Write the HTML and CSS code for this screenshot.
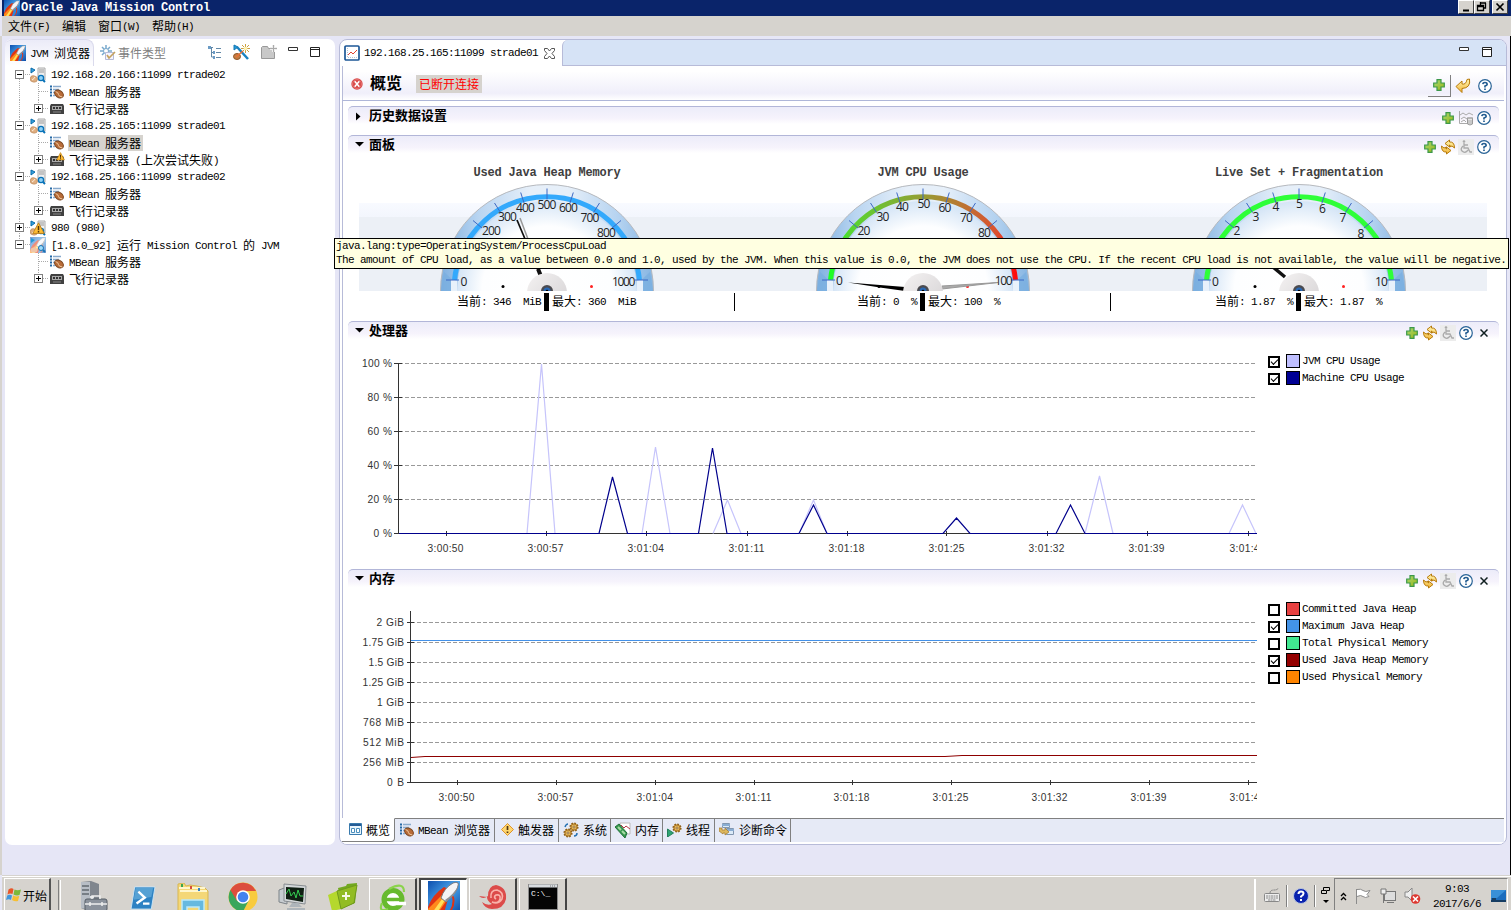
FILE: index.html
```html
<!DOCTYPE html>
<html lang="zh-CN">
<head>
<meta charset="utf-8">
<title>Oracle Java Mission Control</title>
<link rel="stylesheet" href="styles.css">
</head>
<body>
<svg class="defs" width="0" height="0">
  <defs>
    <linearGradient id="rocketBg" x1="0" y1="0" x2="1" y2="1"><stop offset="0" stop-color="#0d4fae"/><stop offset=".5" stop-color="#4aa4ea"/><stop offset="1" stop-color="#0b4ba8"/></linearGradient>
    <linearGradient id="plusG" x1="0" y1="0" x2="1" y2="1"><stop offset="0" stop-color="#a6d977"/><stop offset="1" stop-color="#9ab512"/></linearGradient>
    <linearGradient id="gold" x1="0" y1="0" x2="0" y2="1"><stop offset="0" stop-color="#fff6b0"/><stop offset="1" stop-color="#f3b63a"/></linearGradient>
    <linearGradient id="rim" x1="0" y1="0" x2="1" y2="0"><stop offset="0" stop-color="#7fb0e0"/><stop offset=".18" stop-color="#b9d5f1"/><stop offset=".42" stop-color="#e6eff9"/><stop offset=".6" stop-color="#e6eff9"/><stop offset=".84" stop-color="#b4d2f0"/><stop offset="1" stop-color="#86b5e2"/></linearGradient>
    <radialGradient id="face" cx=".5" cy=".5" r=".5"><stop offset="0" stop-color="#fff"/><stop offset=".72" stop-color="#fdfeff"/><stop offset="1" stop-color="#d5e5f6"/></radialGradient>
    <linearGradient id="heat" x1="0" y1="0" x2="1" y2="0"><stop offset="0" stop-color="#1bff24"/><stop offset=".1" stop-color="#55d632"/><stop offset=".5" stop-color="#969e34"/><stop offset=".9" stop-color="#dc5030"/><stop offset="1" stop-color="#ff0a0a"/></linearGradient>
    <linearGradient id="hub" x1="0" y1="0" x2="1" y2="1"><stop offset="0" stop-color="#f4f2f2"/><stop offset="1" stop-color="#d3d0d2"/></linearGradient>

    <symbol id="i-rocket" viewBox="0 0 16 16"><rect width="16" height="16" fill="url(#rocketBg)"/><path d="M0 13Q2 7 8 3L10 4 13 8Q14 12 11 16H0Z" fill="#df3413"/><path d="M8 16 10 9 12 8Q13 12 10 16Z" fill="#2c86dc"/><path d="M0 14 7 7 9.500 9.500 5 16H0Z" fill="#ff8a1c"/><path d="M2 16 7 9 8.200 10 4.500 16Z" fill="#ffe05a"/><path d="M6.500 8.500Q8 3.500 12.500 1 15 .200 15.200 1.500 15 5.500 9 10.500Z" fill="#f4f4f6" stroke="#77787e" stroke-width=".5"/><path d="M8.500 9.500Q13 6.500 15 2.500 14 7 9 10.500Z" fill="#8d9097"/></symbol>
    <symbol id="i-jvm" viewBox="0 0 16 16"><path d="M8 1h7v12H8Z" fill="#eee" stroke="#aaa"/><path d="M9 3h5M9 5h5" stroke="#999"/><path d="M1 1v5l4-3Z" fill="#36a3df" stroke="#086aa9"/><ellipse cx="3.800" cy="12" rx="3.500" ry="3" fill="#dfae80" stroke="#c9986c" transform="rotate(20 4 12)"/><path d="M2 13Q4 12 5 10" stroke="#fff0dd" fill="none"/><circle cx="11" cy="11" r="2.600" fill="#8fd2f8" stroke="#0872b8" stroke-width="1.300"/><path d="m13 13 2 2" stroke="#0872b8" stroke-width="2"/></symbol>
    <symbol id="i-warn" viewBox="0 0 16 16"><path d="M8 1 15 14H1Z" fill="#ffbd35" stroke="#b47610" stroke-linejoin="round"/><path d="M8 5v5M8 11v2" stroke="#55350a" stroke-width="1.800"/></symbol>
    <symbol id="i-bean" viewBox="0 0 14 14"><path d="M0 1.500h2M0 4.500h2M0 7.500h2M0 10.500h2" stroke="#2468a5" stroke-width="2"/><path d="M3 1.500h8M3 4.500h6M3 7.500h2M3 10.500h2" stroke="#87a9cc" stroke-width="1.500"/><ellipse cx="9" cy="9" rx="4.700" ry="3.400" fill="#b86c38" stroke="#784019" transform="rotate(35 9 9)"/><path d="M5.500 6.500q3 1 3 3t4 2.500" stroke="#f1c99e" fill="none"/></symbol>
    <symbol id="i-rec" viewBox="0 0 14 10"><path d="M1 0h12l1 2v8H0V2Z" fill="#414141"/><path d="M2 2h10v4H2Z" fill="#aaa"/><path d="M3 3h2v2H3ZM9 3h2v2H9ZM6 3h2v2H6Z" fill="#333"/><path d="M3 8h8" stroke="#888"/></symbol>
    <symbol id="i-plus" viewBox="0 0 12 12"><path d="M4 0.700h4V4h3.300v4H8v3.300H4V8H.700V4H4Z" fill="url(#plusG)" stroke="#3b984a" stroke-width="1.200"/></symbol>
    <symbol id="i-help" viewBox="0 0 14 14"><circle cx="7" cy="7" r="6.300" fill="#fff" stroke="#286396" stroke-width="1.200"/><path d="M4.800 5.200Q5 3.500 7 3.500t2.200 1.700Q9.200 6.200 7 7v1.500M7 9.500v1.500" fill="none" stroke="#245d91" stroke-width="1.700"/></symbol>
    <symbol id="i-back" viewBox="0 0 16 16"><path d="M1 8.500 7 3v3q4 1 5-4.500l2.500-.500q1.500 9-7.500 9.500v4Z" fill="url(#gold)" stroke="#b77a0b"/></symbol>
    <symbol id="i-sync" viewBox="0 0 16 16"><path d="M5 4.500 9.500 1v2q5-.500 5 6l-2.500-2-2.500 1Q11 6 9.500 6v2ZM11 11.500 6.500 15v-2q-5 .500-5-6L4 9l2.500-1Q5 10 6.500 10V8Z" fill="url(#gold)" stroke="#b77a0b"/></symbol>
    <symbol id="i-acc" viewBox="0 0 16 16"><rect width="16" height="16" fill="#ececec"/><circle cx="6" cy="2.500" r="1.300" fill="#aaa"/><path d="M6 4v5h4l2 4h2M6 6h4M5 7q-3 3-1 5 3 3 6-1" fill="none" stroke="#aaa" stroke-width="1.300"/></symbol>
    <symbol id="i-clear" viewBox="0 0 16 16"><path d="M1.500 1v12.500H9M2 5l3-2 3 2 3-2 4 2M3 9l3-2 3 2M3 12l3-2 2 2" fill="none" stroke="#aaa"/><path d="M9.500 8h5v6q-2.500 2-5 0Z" fill="#e6e6e6" stroke="#999"/><path d="M11 10v4M13 10v4M9 8h6" stroke="#aaa"/></symbol>
    <symbol id="i-x" viewBox="0 0 8 8"><path d="m.500.500 7 7M7.500.500l-7 7" stroke="#102020" stroke-width="1.500"/></symbol>
    <symbol id="i-min" viewBox="0 0 12 12"><path d="M1.500 1.500h9v3h-9Z" fill="#fff" stroke="#333"/></symbol>
    <symbol id="i-max" viewBox="0 0 12 12"><path d="M1.500 1.500h9v9h-9ZM1 3.500h10" fill="#fff" stroke="#222"/></symbol>
    <symbol id="i-gear" viewBox="0 0 12 12"><circle cx="6" cy="6" r="4.500" fill="#e8ad42" stroke="#8d601d" stroke-width="2" stroke-dasharray="2 1.500"/><circle cx="6" cy="6" r="3.500" fill="#f1c565" stroke="#9d6b22"/><circle cx="6" cy="6" r="1.300" fill="#fff" stroke="#815315"/></symbol>

    <symbol id="dial" viewBox="0 0 216 107">
      <circle cx="108" cy="107" r="106.500" fill="url(#rim)" stroke="#b5b8bd"/>
      <circle cx="108" cy="107" r="90" fill="url(#face)"/>
      <path d="M2 107 5 88l13 12v7ZM214 107l-3-19-13 12v7Z" fill="#78aee0" opacity=".7"/>
      <path d="M12 96v11h6V96ZM198 96v11h6V96Z" fill="#e8f1fb"/>
    </symbol>
    <symbol id="ticks" viewBox="0 0 216 107">
      <g stroke="#3d69c5" stroke-width="1"><path d="M108 4.500v11"/><path d="M81.700 8.500l3.500 11"/><path d="M134.300 8.500l-3.500 11"/><path d="M55.500 19l6 9.500"/><path d="M160.500 19l-6 9.500"/><path d="M34 36.500l9 7.500"/><path d="M182 36.500l-9 7.500"/><path d="M7 96h13M196 96h13"/></g>
      <circle cx="64" cy="102.500" r="1.500"/><circle cx="152.500" cy="102.500" r="1.500" fill="#f22"/>
    </symbol>
    <symbol id="pivot" viewBox="0 0 216 107"><circle cx="108" cy="109" r="20" fill="url(#hub)"/><circle cx="108" cy="107" r="6" fill="#4b4b50"/><circle cx="108" cy="107" r="3.500" fill="#2868b5"/><circle cx="108" cy="107" r="1.300" fill="#000"/></symbol>
  </defs>
</svg>

<div class="screen">
  <header class="titlebar"><svg width="16" height="16"><use href="#i-rocket"/></svg><b>Oracle Java Mission Control</b>
    <span class="winbtns"><i><svg width="14" height="12"><path d="M4 9.500h6" stroke="#000" stroke-width="2"/></svg></i><i><svg width="14" height="12"><path d="M5.500 1v3M5 2h6M10.500 2v5h-2M2.500 4.500h6v5h-6ZM2 5.500h7" fill="none" stroke="#000" stroke-width="1.300"/></svg></i><i class="close"><svg width="14" height="12"><path d="m3.500 2.500 7 7m0-7-7 7" stroke="#000" stroke-width="1.700"/></svg></i></span>
  </header>
  <nav class="menubar"><span>文件<em>(F)</em></span><span>编辑</span><span>窗口<em>(W)</em></span><span>帮助<em>(H)</em></span></nav>

  <main class="workspace">
    <aside class="browser">
      <div class="viewtabs">
        <div class="viewtab"><svg width="16" height="16"><use href="#i-rocket"/></svg><span><em>JVM </em>浏览器</span></div>
        <div class="viewtab off"><svg width="16" height="16" viewBox="0 0 16 16"><path d="M6 0v12M0 6h12M2 2l8 8M10 2l-8 8" stroke="#78a9cd" stroke-width="1.500"/><circle cx="6" cy="6" r="2.500" fill="#fff" stroke="#78a9cd"/><path d="M5.500 7.500h8v7h-8Z" fill="#f4f4ff" stroke="#b5b9d6"/><path d="m7 10 2 3 6-6" fill="none" stroke="#c4a25e" stroke-width="1.700"/></svg><span>事件类型</span></div>
        <div class="viewtools">
          <svg width="14" height="13" viewBox="0 0 14 13"><path d="M1 1.500h4M3.500 2v9h3M4 6.500h3M8 2.500h5M8 6.500h5M8 11.500h5" fill="none" stroke="#6288a7"/><path d="M0 0h3v3H0ZM5 5h2v3H5ZM5 10h2v3H5Z" fill="#6b9bc5"/></svg>
          <svg width="17" height="16" viewBox="0 0 17 16"><path d="M1 1v5l4-3Z" fill="#229bd9" stroke="#1578b5"/><path d="m4 3 11 12" stroke="#1981c0" stroke-width="2.500"/><path d="M12.500 0v9M8 4.500h9M9 1l7 7M16 1 9 8" stroke="#cda040"/><circle cx="12.500" cy="4.500" r="1.800" fill="#fff4b6"/><ellipse cx="4" cy="12.500" rx="3.500" ry="3" fill="#c27d43" stroke="#8e5426"/><path d="M3 13 10 7" stroke="#eb6f34" stroke-width="1.500"/></svg>
          <svg width="16" height="15" viewBox="0 0 16 15"><path d="M.500 13.500v-11l1-1h5l1 2h6v10Z" fill="#c8c8c8" stroke="#999"/><path d="M12.500 0v7M9 3.500h7" stroke="#eee" stroke-width="3"/><path d="M12.500 0v7M9 3.500h7" stroke="#aaa"/></svg>
          <svg width="12" height="12"><use href="#i-min"/></svg>
          <svg width="12" height="12"><use href="#i-max"/></svg>
        </div>
      </div>
      <div class="tree">
        <div class="root first"><i class="box minus"></i><svg width="16" height="16"><use href="#i-jvm"/></svg><em>192.168.20.166:11099 rtrade02</em></div>
        <div class="kid"><svg width="14" height="14"><use href="#i-bean"/></svg><span><em>MBean </em>服务器</span></div>
        <div class="kid last"><i class="box plus"></i><svg width="14" height="10"><use href="#i-rec"/></svg><span>飞行记录器</span></div>
        <div class="root"><i class="box minus"></i><svg width="16" height="16"><use href="#i-jvm"/></svg><em>192.168.25.165:11099 strade01</em></div>
        <div class="kid"><svg width="14" height="14"><use href="#i-bean"/></svg><span class="sel"><em>MBean </em>服务器</span></div>
        <div class="kid last"><i class="box plus"></i><svg class="over" width="14" height="12"><use href="#i-rec" y="2" width="14" height="10"/><use href="#i-warn" x="6" y="-2" width="9" height="9"/></svg><span>飞行记录器<em> (</em>上次尝试失败<em>)</em></span></div>
        <div class="root"><i class="box minus"></i><svg width="16" height="16"><use href="#i-jvm"/></svg><em>192.168.25.166:11099 strade02</em></div>
        <div class="kid"><svg width="14" height="14"><use href="#i-bean"/></svg><span><em>MBean </em>服务器</span></div>
        <div class="kid last"><i class="box plus"></i><svg width="14" height="10"><use href="#i-rec"/></svg><span>飞行记录器</span></div>
        <div class="root"><i class="box plus"></i><svg width="16" height="16"><use href="#i-jvm"/><use href="#i-warn" x="2" y="2" width="13" height="13"/></svg><em>980 (980)</em></div>
        <div class="root end"><i class="box minus"></i><svg width="16" height="16"><use href="#i-rocket" opacity=".55"/><path d="M1 1v5l4-3Z" fill="#229bd9"/><ellipse cx="4" cy="13" rx="3.500" ry="2.500" fill="#efc6a8"/><circle cx="11" cy="11" r="2.500" fill="#9edbfb" stroke="#1775b6"/><path d="m13 13 2 2" stroke="#1775b6" stroke-width="2"/></svg><span><em>[1.8.0_92] </em>运行<em> Mission Control </em>的<em> JVM</em></span></div>
        <div class="kid off"><svg width="14" height="14"><use href="#i-bean"/></svg><span><em>MBean </em>服务器</span></div>
        <div class="kid last off"><i class="box plus"></i><svg width="14" height="10"><use href="#i-rec"/></svg><span>飞行记录器</span></div>
      </div>
    </aside>

    <section class="editor">
      <div class="edtabs">
        <div class="edtab"><svg width="16" height="16" viewBox="0 0 16 16"><rect x="1" y="1" width="14" height="14" rx="1" fill="#fff" stroke="#1c5796" stroke-width="1.700"/><path d="M3.500 3v9.500H13" fill="none" stroke="#b7c3d2" stroke-dasharray="1 1"/><path d="m4 10 3-3 2 2 4-4" fill="none" stroke="#e04231"/></svg><em>192.168.25.165:11099 strade01</em>
          <svg width="11" height="11" viewBox="0 0 11 11"><path d="M.500.500h3l2 2.500 2-2.500h3v2L8 5.500l2.500 3v2h-3l-2-2.500-2 2.500h-3v-2l2.500-3-2.500-3Z" fill="#fff" stroke="#555"/></svg></div>
        <div class="edspace"><svg width="12" height="12"><use href="#i-min"/></svg><svg width="12" height="12"><use href="#i-max"/></svg></div>
      </div>
      <div class="formhead">
        <svg width="12" height="12" viewBox="0 0 12 12"><circle cx="6" cy="6" r="5.700" fill="#d84b4b"/><circle cx="6" cy="6" r="4.500" fill="none" stroke="#ec8c88" stroke-width=".6"/><path d="m3.700 3.200 4.600 5.600m0-5.600L3.700 8.800" stroke="#fff" stroke-width="1.500"/></svg>
        <h1>概览</h1><span class="lost">已断开连接</span>
        <div class="headtools"><span class="raised"><svg width="12" height="12"><use href="#i-plus"/></svg></span><svg width="16" height="16"><use href="#i-back"/></svg><svg width="14" height="14"><use href="#i-help"/></svg></div>
      </div>

      <div class="form">
        <section class="sec hist">
          <div class="bar"><svg class="tw" width="7" height="9"><path d="M1 0.500v8l4.500-4Z"/></svg><h2>历史数据设置</h2><div class="tools"><svg width="12" height="12"><use href="#i-plus"/></svg><svg width="16" height="16"><use href="#i-clear"/></svg><svg width="14" height="14"><use href="#i-help"/></svg></div></div>
        </section>
        <section class="sec dash">
          <div class="bar"><svg class="tw" width="9" height="7"><path d="M0 1h9L4.500 5.500Z"/></svg><h2>面板</h2><div class="tools"><svg width="12" height="12"><use href="#i-plus"/></svg><svg class="sync" width="16" height="16"><use href="#i-sync"/></svg><svg width="16" height="16"><use href="#i-acc"/></svg><svg width="14" height="14"><use href="#i-help"/></svg></div></div>
          <div class="gauges">
            <div class="gauge"><h3>Used Java Heap Memory</h3>
              <svg width="216" height="107" class="num"><use href="#dial"/><path d="M15.500 96A93 93 0 0 1 200.500 96" fill="none" stroke="#33a9fc" stroke-width="5"/><use href="#ticks"/>
                <path d="M81 34 106 100" stroke="#999" stroke-width="1.500"/><path d="M78 36 108 107" stroke="#111" stroke-width="1.700"/><path d="M99 85 108 107" stroke="#111" stroke-width="4"/><use href="#pivot"/>
                <text x="24.500" y="102">0</text><text x="52" y="50.500">200</text><text x="68" y="36.500">300</text><text x="86" y="28">400</text><text x="107.500" y="25">500</text><text x="129" y="28">600</text><text x="150.500" y="38">700</text><text x="167" y="52.500">800</text><text x="184" y="102" class="tight">1000</text></svg>
              <div class="read"><span>当前<em>: 346  MiB</em></span><i></i><span>最大<em>: 360  MiB</em></span></div></div>
            <div class="gauge"><h3>JVM CPU Usage</h3>
              <svg width="216" height="107" class="num"><use href="#dial"/><path d="M15.500 96A93 93 0 0 1 200.500 96" fill="none" stroke="url(#heat)" stroke-width="5"/><use href="#ticks"/>
                <path d="M183 98.500 127 102v3Z" fill="#aaa" stroke="#999"/><path d="M33 98.500 65 101 90 103v4L65 103.500Z"/><use href="#pivot"/>
                <text x="24" y="101">0</text><text x="48.500" y="50.500">20</text><text x="67.500" y="36.500">30</text><text x="87" y="27">40</text><text x="108.500" y="24">50</text><text x="129.500" y="28">60</text><text x="151" y="38">70</text><text x="169" y="52.500">80</text><text x="188" y="101" class="tight">100</text></svg>
              <div class="read"><span>当前<em>: 0  %</em></span><i></i><span>最大<em>: 100  %</em></span></div></div>
            <div class="gauge"><h3>Live Set + Fragmentation</h3>
              <svg width="216" height="107" class="num"><use href="#dial"/><path d="M15.500 96A93 93 0 0 1 200.500 96" fill="none" stroke="#2eff38" stroke-width="5"/><use href="#ticks"/>
                <path d="M76 78 94 93" stroke="#111" stroke-width="3.500"/><use href="#pivot"/>
                <text x="24" y="101.500">0</text><text x="45.500" y="50.500">2</text><text x="64.500" y="37">3</text><text x="84.500" y="27">4</text><text x="108" y="24">5</text><text x="131" y="29">6</text><text x="151.500" y="37.500">7</text><text x="169.500" y="53.500">8</text><text x="190" y="102">10</text></svg>
              <div class="read"><span>当前<em>: 1.87  %</em></span><i></i><span>最大<em>: 1.87  %</em></span></div></div>
          </div>
        </section>
        <section class="sec cpu">
          <div class="bar"><svg class="tw" width="9" height="7"><path d="M0 1h9L4.500 5.500Z"/></svg><h2>处理器</h2><div class="tools"><svg width="12" height="12"><use href="#i-plus"/></svg><svg class="sync" width="16" height="16"><use href="#i-sync"/></svg><svg width="16" height="16"><use href="#i-acc"/></svg><svg width="14" height="14"><use href="#i-help"/></svg><svg width="8" height="8" class="xx"><use href="#i-x"/></svg></div></div>
          <div class="plotrow">
            <svg class="plot" width="909" height="210" viewBox="348 350 909 210">
              <path class="grid" d="M399 363.500H1257M399 397.500H1257M399 431.500H1257M399 465.500H1257M399 499.500H1257"/>
              <path class="axis" d="M398.500 363V534M394 363.500h8M394 397.500h8M394 431.500h8M394 465.500h8M394 499.500h8M394 533.500H1257M446.500 531v5M546.500 531v5M646.500 531v5M747.500 531v5M847.500 531v5M946.500 531v5M1047.500 531v5M1147.500 531v5M1248.500 531v5"/>
              <path d="M527 533.500 541.500 364 555 533.500M642 533.500 655.500 447 670 533.500M713 533.500 727.500 500 741 533.500M799 533.500 813.500 500 827 533.500M1085 533.500 1099.500 476 1113 533.500M1229 533.500 1242.500 505 1256 533.500" fill="none" stroke="#c6c4fb" stroke-width="1.200"/>
              <path d="M399 533.500H599L612.500 477 627.500 533.500H698.500L712.500 448 727 533.500H799L813.500 505 827 533.500H943L956.500 518 970 533.500H1056L1070.500 505 1085 533.500H1257" fill="none" stroke="#00008c" stroke-width="1.200"/>
              <g class="yl"><text x="392" y="367" textLength="30">100 %</text><text x="392" y="401" textLength="24.500">80 %</text><text x="392" y="435" textLength="24.500">60 %</text><text x="392" y="469" textLength="24.500">40 %</text><text x="392" y="503" textLength="24.500">20 %</text><text x="392" y="537" textLength="18.500">0 %</text></g>
              <g class="xl"><text x="427.500" y="552" textLength="36">3:00:50</text><text x="527.500" y="552" textLength="36">3:00:57</text><text x="627.500" y="552" textLength="36.500">3:01:04</text><text x="728.500" y="552" textLength="36">3:01:11</text><text x="828.500" y="552" textLength="36">3:01:18</text><text x="928.500" y="552" textLength="36">3:01:25</text><text x="1028.500" y="552" textLength="36">3:01:32</text><text x="1128.500" y="552" textLength="36">3:01:39</text><text x="1229.500" y="552" textLength="36">3:01:46</text></g>
            </svg>
            <ul class="legend">
              <li><i class="ck on"></i><b class="c1"></b><em>JVM CPU Usage</em></li>
              <li><i class="ck on"></i><b class="c2"></b><em>Machine CPU Usage</em></li>
            </ul>
          </div>
        </section>
        <section class="sec mem">
          <div class="bar"><svg class="tw" width="9" height="7"><path d="M0 1h9L4.500 5.500Z"/></svg><h2>内存</h2><div class="tools"><svg width="12" height="12"><use href="#i-plus"/></svg><svg class="sync" width="16" height="16"><use href="#i-sync"/></svg><svg width="16" height="16"><use href="#i-acc"/></svg><svg width="14" height="14"><use href="#i-help"/></svg><svg width="8" height="8" class="xx"><use href="#i-x"/></svg></div></div>
          <div class="plotrow">
            <svg class="plot" width="909" height="210" viewBox="348 598 909 210">
              <path class="grid" d="M411 622.500H1257M411 642.500H1257M411 662.500H1257M411 682.500H1257M411 702.500H1257M411 722.500H1257M411 742.500H1257M411 762.500H1257"/>
              <path class="axis" d="M410.500 611V783M407 622.500h7M407 642.500h7M407 662.500h7M407 682.500h7M407 702.500h7M407 722.500h7M407 742.500h7M407 762.500h7M407 782.500H1257M457.500 780v5M556.500 780v5M655.500 780v5M754.500 780v5M852.500 780v5M951.500 780v5M1050.500 780v5M1149.500 780v5M1248.500 780v5"/>
              <path d="M411 640.500H1257" stroke="#4391e8"/>
              <path d="M411 757.500 425 756.500H945L962 755.500H1257" fill="none" stroke="#8e0000"/>
              <g class="yl"><text x="404" y="626" textLength="27.500">2 GiB</text><text x="404" y="646" textLength="41.500">1.75 GiB</text><text x="404" y="666" textLength="35.500">1.5 GiB</text><text x="404" y="686" textLength="41.500">1.25 GiB</text><text x="404" y="706" textLength="27">1 GiB</text><text x="404" y="726" textLength="41">768 MiB</text><text x="404" y="746" textLength="41">512 MiB</text><text x="404" y="766" textLength="41">256 MiB</text><text x="404" y="786" textLength="17">0 B</text></g>
              <g class="xl"><text x="438.500" y="801" textLength="36">3:00:50</text><text x="537.500" y="801" textLength="36">3:00:57</text><text x="636.500" y="801" textLength="36.500">3:01:04</text><text x="735.500" y="801" textLength="36">3:01:11</text><text x="833.500" y="801" textLength="36">3:01:18</text><text x="932.500" y="801" textLength="36">3:01:25</text><text x="1031.500" y="801" textLength="36">3:01:32</text><text x="1130.500" y="801" textLength="36">3:01:39</text><text x="1229.500" y="801" textLength="36">3:01:46</text></g>
            </svg>
            <ul class="legend">
              <li><i class="ck"></i><b class="c3"></b><em>Committed Java Heap</em></li>
              <li><i class="ck on"></i><b class="c4"></b><em>Maximum Java Heap</em></li>
              <li><i class="ck"></i><b class="c5"></b><em>Total Physical Memory</em></li>
              <li><i class="ck on"></i><b class="c6"></b><em>Used Java Heap Memory</em></li>
              <li><i class="ck"></i><b class="c7"></b><em>Used Physical Memory</em></li>
            </ul>
          </div>
        </section>
      </div>

      <nav class="pages">
        <div class="page cur"><svg width="13" height="12" viewBox="0 0 13 12"><path d="M.500.500h12v11H.500Z" fill="#e9f5fc" stroke="#397aad"/><path d="M1 2h11" stroke="#245c95" stroke-width="2"/><path d="M2.500 5.500h3v4h-3ZM7.500 5.500h3v4h-3Z" fill="#fff" stroke="#498ebd"/></svg><span>概览</span></div>
        <div class="page w2"><svg width="14" height="14"><use href="#i-bean"/></svg><span><em>MBean </em>浏览器</span></div>
        <div class="page w3"><svg width="13" height="13" viewBox="0 0 13 13"><path d="m6.500.500 6 6-6 6-6-6Z" fill="#ffd66d" stroke="#dc942e"/><path d="M6.500 3v4M6.500 8.500v1.500" stroke="#4e3514" stroke-width="1.700"/></svg><span>触发器</span></div>
        <div class="page w4"><svg width="16" height="16"><use href="#i-gear" x="0" y="6" width="10" height="10"/><use href="#i-gear" x="6" y="0" width="10" height="10"/><path d="M2 5q1-3 3-3M11 14q3 0 3-3" fill="none" stroke="#2571b3" stroke-width="1.500"/></svg><span>系统</span></div>
        <div class="page w4"><svg width="16" height="16" viewBox="0 0 16 16"><path d="M5 1h10v11H7Z" fill="#fff" stroke="#bbb"/><path d="m6 3 3 3 2-2 4 3" fill="none" stroke="#b33845"/><path d="M0 5 4 2l8 9-2 5Z" fill="#37974e" stroke="#20723a"/><path d="m3 5 3 3m1 1 3 3" stroke="#a7dba4" stroke-width="2"/></svg><span>内存</span></div>
        <div class="page w4"><svg width="15" height="14"><use href="#i-gear" x="5" y="0" width="10" height="10"/><path d="M0.500 6v8l6-4Z" fill="#2fa574" stroke="#23805a"/></svg><span>线程</span></div>
        <div class="page w7"><svg width="16" height="14" viewBox="0 0 16 14"><path d="M3.500.500h7v4h-7ZM7.500 5.500h7v6h-7Z" fill="#dcebf8" stroke="#8297b0"/><path d="M3 2h8M7 7h8" stroke="#8aadd2" stroke-width="2"/><path d="M0 5h3v2h3V5l4 4-4 3v-2H4v1L0 8Z" fill="#ddb75c" stroke="#a1782d" stroke-width=".7"/></svg><span>诊断命令</span></div>
      </nav>
    </section>
  </main>

  <footer class="taskbar">
    <div class="start"><svg width="16" height="16" viewBox="0 0 16 16"><path d="M2.500 2.500q3-2 5-.500L6.500 7Q4 6 1.500 7.500Z" fill="#e8562a"/><path d="M8.500 2.500q3 1.500 6.500 0L13.500 8q-3 1-6-.500Z" fill="#7bb93a"/><path d="M1.200 8.500Q4 7 6 8.500L5 13q-2-1.500-5 0Z" fill="#4196dc"/><path d="M7.200 8.500q2.500 1.500 6 .500L12 14q-3 1-6-1Z" fill="#f6bf32"/></svg><span>开始</span></div>
    <i class="grip"></i>
    <div class="quick">
      <svg width="30" height="32" viewBox="0 0 30 32"><path d="M2 1 12 0l8 3v23L9 30 2 27Z" fill="#80868e"/><path d="M2 1h9v28l-9-2Z" fill="#b7bdc5"/><path d="M3 5h7M3 9h7M3 13h7" stroke="#636970" stroke-width="1.500"/><path d="M11 15h4v6h-4Z" fill="#dfe3e7"/><rect x="6" y="18" width="22" height="12" rx="2" fill="#8b929c" stroke="#555c65"/><path d="M13 18v-3h8v3M6 23h22M11 21v4M23 21v4" fill="none" stroke="#eee" stroke-width="1.500"/></svg>
      <svg width="28" height="24" viewBox="0 0 28 26"><path d="M5 1h22l-4 24H1Z" fill="#2d82c3" stroke="#cbe5f5"/><path d="M6 2h19l-2 10L4 15Z" fill="#68aedb" opacity=".7"/><path d="m9 6 7 6.500L7 19M14 19h7" fill="none" stroke="#fff" stroke-width="2.500"/></svg>
      <svg width="32" height="30" viewBox="0 0 32 30"><path d="M1 5V1l6-1 2 3 4-1 7 1 8 2 3 3v22H1Z" fill="#f4d777" stroke="#d7b652"/><path d="M2 5h26M3 8h27" stroke="#fff6cb" stroke-width="2"/><path d="M5 1v3" stroke="#35a752" stroke-width="2"/><path d="M14 3v3" stroke="#d84c3b" stroke-width="2"/><path d="M22 5v3" stroke="#3582c4" stroke-width="2"/><path d="M5 17h22v13h-5v-6H10v6H5Z" fill="#67b9df" stroke="#bae9fb" stroke-width="1.500"/></svg>
      <svg width="30" height="30" viewBox="0 0 30 30"><circle cx="15" cy="15" r="14.500" fill="#f8cb3f"/><path d="M15 15 2.400 8A14.500 14.500 0 0 0 15 29.500L21 18Z" fill="#39a65c"/><path d="M2.400 8 9 19l6-10h13A14.500 14.500 0 0 0 2.400 8Z" fill="#dc4d3d"/><circle cx="15" cy="15" r="6.800" fill="#fff"/><circle cx="15" cy="15" r="5.300" fill="#4382ef"/></svg>
      <svg width="30" height="30" viewBox="0 0 30 30"><path d="M1 7 9 4v17l-8-2Z" fill="#c7ccd0" stroke="#7d8388"/><path d="M6 1 28 3l-1 18L6 18Z" fill="#d4d8da" stroke="#878c90"/><path d="M8 4 26 5l-1 14L8 16Z" fill="#101f13"/><path d="m8 11 3-5 2 7 3-4 2 6 2-8 2 6h3" fill="none" stroke="#34cc50"/><path d="M11 24h13l-4-4h-6ZM9 25h18v2H9Z" fill="#aeb5ba"/></svg>
      <svg width="30" height="28" viewBox="0 0 30 28"><path d="M10 5 18 3l1-2 10-1-2 20-13 5Z" fill="#72a91f"/><path d="m0 12 11-5 2 19-9 2Z" fill="#b5d82d"/><path d="m9 8 20-6-3 18-13 6Z" fill="#92bc24" stroke="#6f991c"/><path d="M18 9v8m-4-4h8" stroke="#f7fae6" stroke-width="2"/></svg>
    </div>
    <div class="tasks">
      <div class="task"><svg width="28" height="29" viewBox="0 0 28 29"><circle cx="14" cy="15.500" r="9" fill="#fff" stroke="#67ba2e" stroke-width="5"/><path d="M7 15.500h16" stroke="#67ba2e" stroke-width="3.500"/><path d="M15 19.500h12" stroke="#fff" stroke-width="3.500"/><path d="M3 19Q-1 29 9 25M10 5Q25-3 25 8" fill="none" stroke="#8bd34c" stroke-width="2.200"/></svg></div>
      <div class="task down"><svg width="32" height="32"><use href="#i-rocket"/></svg></div>
      <div class="task"><svg width="30" height="28" viewBox="0 0 30 28"><path d="M1 12Q5 16 10 12 10 2 18 1 29 3 28 15 26 25 14 25 7 25 4 18q5 4 10 2-5-3-5-7Z" fill="#dc4b4a"/><path d="M13 14q-1-8 6-8 7 2 5 9-4 6-10 3 7 2 8-3 1-5-4-4-3 2 0 4" fill="none" stroke="#f9b2aa" stroke-width="1.600"/></svg></div>
      <div class="task"><svg width="30" height="26" viewBox="0 0 30 26"><rect x=".5" y=".5" width="29" height="25" fill="#050505" stroke="#8b8b8b"/><path d="M1 2h28" stroke="#d8dce0" stroke-width="3"/><path d="M22 2h6" stroke="#777" stroke-dasharray="1 1"/><text x="3" y="12" fill="#fff" font-family="Liberation Mono" font-size="8">C:\_</text></svg></div>
    </div>
    <div class="lang"><svg width="17" height="15" viewBox="0 0 17 15"><rect x=".5" y="5.500" width="15" height="8" rx="1" fill="#eee" stroke="#888"/><path d="M2 8h12M2 10h12M4 12h8M6 5q0-3 4-3t4-2" fill="none" stroke="#888" stroke-dasharray="2 .5"/></svg><i></i><svg width="16" height="16" viewBox="0 0 16 16"><circle cx="8" cy="8" r="7.500" fill="#0a22ae" stroke="#b8c5df"/><path d="M5.500 6q0-2.500 2.500-2.500t2.500 2q0 1.500-2.500 3v1M8 11v2" fill="none" stroke="#fff" stroke-width="2"/></svg><i></i><svg width="9" height="18" viewBox="0 0 9 18"><path d="M2.500 3V.500h6v3H6M.500 3.500h5v3h-5Z" fill="none" stroke="#000"/><path d="M2 13h6l-3 3Z"/></svg></div>
    <div class="tray">
      <svg width="7" height="9"><path d="m1 4 2.500-2.500L6 4M1 8l2.500-2.500L6 8" fill="none" stroke="#000" stroke-width="1.300"/></svg>
      <svg width="17" height="16" viewBox="0 0 17 16"><path d="M1.500 1v15M2 1.500q4-1 6 1t7 0l-3 4 2 2q-4 2-6 0t-6 0" fill="#fff" stroke="#8b8b8b"/></svg>
      <svg width="16" height="16" viewBox="0 0 16 16"><rect x="4.500" y="3.500" width="11" height="9" fill="#ddd" stroke="#777"/><path d="M7 14.500h7M1 1h5v5H1ZM3.500 6v9" fill="#eee" stroke="#777"/></svg>
      <svg width="17" height="16" viewBox="0 0 17 16"><path d="M1 4h3l4-4v13L4 9H1Z" fill="#eee" stroke="#888"/><circle cx="11.500" cy="11" r="4.800" fill="#dd3830"/><path d="m9 8.500 5 5m0-5-5 5" stroke="#fff" stroke-width="1.600"/></svg>
      <div class="clock"><em>9:03</em><em>2017/6/6</em></div>
      <svg width="15" height="12" viewBox="0 0 15 12"><path d="M0 0h15v11H0Z" fill="#1c6dbd"/><path d="M0 0h15L6 8H0Z" fill="#3990d8"/><path d="M0 11h15M1 9h4" stroke="#163d63" stroke-width="2"/></svg>
    </div>
  </footer>

  <div class="tip"><em>java.lang:type=OperatingSystem/ProcessCpuLoad</em><em>The amount of CPU load, as a value between 0.0 and 1.0, used by the JVM. When this value is 0.0, the JVM does not use the CPU. If the recent CPU load is not available, the value will be negative.</em></div>
</div>
</body>
</html>
```
FILE: styles.css
```css
* { box-sizing: border-box; }
body { margin: 0; overflow: hidden; font: 12px/17px "Noto Sans CJK SC", sans-serif; color: #000; }
h1, h2, h3, ul { margin: 0; padding: 0; list-style: none; }
svg { display: block; flex: none; }
em { font: 11px/14px "Liberation Mono", monospace; letter-spacing: -0.6px; white-space: pre; }
span > em { position: relative; top: -1px; }
.defs { position: absolute; }

.screen { position: relative; width: 1511px; height: 910px; display: flex; flex-direction: column; background: #e6e6f6; overflow: hidden; }

.titlebar { height: 16px; margin-left: 2px; padding-left: 2px; flex: none; display: flex; align-items: center; background: #0a246a; color: #fff; overflow: hidden; }
.titlebar b { font: bold 12px/14px "Liberation Mono", monospace; letter-spacing: -0.2px; margin-left: 1px; }
.winbtns { margin-left: auto; display: flex; padding-right: 3px; }
.winbtns i { width: 16px; height: 14px; margin-top: -2px; background: #d6d3ce; border: 1px solid #fff; border-right-color: #404040; border-bottom-color: #404040; }
.winbtns .close { margin-left: 2px; }

.menubar { height: 20px; margin-left: 2px; flex: none; display: flex; align-items: center; gap: 12px; padding-left: 6px; padding-bottom: 1px; background: #d6d3ce; }

.workspace { flex: none; height: 839px; display: flex; gap: 4px; padding: 3px 4px 30px 3px; border-left: 2px solid #d6d3ce; border-right: 1px solid #000; align-items: stretch; }

.browser { width: 330px; flex: none; background: #fff; border-radius: 7px; }
.viewtabs { height: 27px; display: flex; align-items: center; }
.viewtab { display: flex; align-items: center; gap: 4px; height: 27px; padding-left: 5px; width: 89px; background: linear-gradient(#ebebf8, #fff); border-radius: 8px 8px 0 0; border-top: 1px solid #dadaec; border-right: 1px solid #dadaec; white-space: nowrap; }
.viewtab.off { background: none; border: 0; color: #808080; width: 90px; gap: 2px; padding-left: 6px; }
.viewtools { flex: 1; display: flex; align-items: center; justify-content: flex-end; gap: 10px; padding: 0 14px 1px 0; }
.viewtools svg:nth-child(2) { margin: 0 1px; }

.tree { padding-left: 10px; }
.root, .kid { height: 17px; display: flex; align-items: center; white-space: nowrap; }
.root { gap: 6px; background: repeating-linear-gradient(#aaa 0 1px, transparent 1px 2px) 4px 0/1px 17px no-repeat, repeating-linear-gradient(90deg, #aaa 0 1px, transparent 1px 2px) 10px 8px/5px 1px no-repeat; }
.root.first { background-position: 4px 9px, 10px 8px; }
.root.end { background-size: 1px 8px, 5px 1px; }
.root > em, .root > span { margin-left: -1px; }
.box { width: 9px; height: 9px; flex: none; border: 1px solid #808080; background: linear-gradient(#000, #000) center/5px 1px no-repeat #fff; }
.box.plus { background: linear-gradient(#000, #000) center/5px 1px no-repeat, linear-gradient(#000, #000) center/1px 5px no-repeat #fff; }
.kid { padding-left: 35px; gap: 3px; background: repeating-linear-gradient(#aaa 0 1px, transparent 1px 2px) 4px 0/1px 17px no-repeat, repeating-linear-gradient(#aaa 0 1px, transparent 1px 2px) 23px 0/1px 17px no-repeat, repeating-linear-gradient(90deg, #aaa 0 1px, transparent 1px 2px) 24px 8px/10px 1px no-repeat; }
.kid.off { background-size: 0 0, 1px 17px, 10px 1px; }
.kid.last { padding-left: 19px; background-size: 1px 17px, 1px 8px, 10px 1px; }
.kid.last.off { background-size: 0 0, 1px 8px, 10px 1px; }
.kid.last .box + svg { margin-left: 4px; }
.kid > span { padding: 0 1px; height: 16px; line-height: 16px; margin-left: 1px; }
.kid .over { overflow: visible; }
.kid .sel { background: #d6d3ce; padding-right: 2px; }

.editor { width: 1168px; flex: none; background: #fff; border: 1px solid #b7bbd8; border-radius: 8px; overflow: hidden; display: flex; flex-direction: column; }
.edtabs { height: 26px; flex: none; display: flex; }
.edtab { width: 222px; display: flex; align-items: center; gap: 4px; padding-left: 4px; }
.edtab > svg + em { margin-right: 2px; width: 174px; }
.edspace { flex: 1; background: #d6e3f6; border-left: 1px solid #b7bbd8; border-bottom: 1px solid #b7bbd8; border-top-left-radius: 6px; display: flex; justify-content: flex-end; gap: 11px; padding: 6px 13px 0 0; }

.formhead { height: 35px; flex: none; margin: 0 2px; border-left: 1px solid #b7bbd8; border-bottom: 1px solid #aeb6d8; background: linear-gradient(#fff 15%, #f0effa 80%, #fff); display: flex; align-items: center; padding: 2px 12px 0 8px; }
.formhead h1 { font-size: 16px; line-height: 20px; font-weight: bold; margin: -4px 0 0 7px; }
.lost { margin-left: 14px; width: 66px; height: 18px; background: #d6d3ce; color: #f00; text-align: center; line-height: 18px; }
.headtools { margin-left: auto; display: flex; align-items: center; gap: 7px; padding-top: 3px; }
.headtools .raised { width: 23px; height: 22px; display: grid; place-items: center; border-right: 1px solid #808080; border-bottom: 1px solid #808080; margin-right: -3px; }

.form { flex: 1; min-height: 0; margin-left: 2px; border-left: 1px solid #b7bbd8; padding: 5px 7px 0 5px; display: flex; flex-direction: column; }
.sec { width: 1151px; flex: none; }
.hist { height: 29px; }
.dash { height: 186px; }
.cpu { height: 248px; }
.bar { height: 20px; display: flex; border-top: 1px solid #b2b6d8; border-radius: 5px 5px 0 0; background: linear-gradient(#ececf9, #f6f3fc 60%, #fff 90%); padding-left: 6px; }
.bar .tw { margin: 5px 0 0 1px; width: 9px; }
.bar h2 { font-size: 13px; line-height: 16px; font-weight: bold; margin-left: 5px; height: 18px; }
.tools { margin-left: auto; height: 21px; display: flex; align-items: center; gap: 3px; padding: 1px 8px 0 0; }
.tools svg:first-child { margin-right: 1px; }
.tools .sync { margin-right: -1px; }
.tools .xx { margin: 0 3px 0 4px; }

.gauges { margin: 12px 0 0 11px; width: 1128px; display: grid; grid-template-columns: repeat(3, 376px); background: linear-gradient(#f8faff, #f3f6fd) 0 36px/100% 14px no-repeat, linear-gradient(#ecf0f6, #ecf0f6) 0 50px/100% 74px no-repeat; }
.gauge { display: flex; flex-direction: column; align-items: center; }
.gauge h3 { font: bold 12px/13px "Liberation Mono", monospace; letter-spacing: -0.2px; color: #404040; height: 17px; }
.num text { font: 12px "Open Sans", sans-serif; letter-spacing: -0.8px; text-anchor: middle; fill: #222; }
.num .tight { letter-spacing: -1.4px; }
.read { align-self: stretch; height: 18px; margin-top: 2px; display: grid; grid-template-columns: 1fr 5px 1fr; gap: 3px; align-items: center; border-right: 1px solid #000; line-height: 16px; }
.read span { margin-top: -1px; }
.gauge:last-child .read { border-right-color: transparent; }
.read span:first-child { text-align: right; }
.read i { height: 18px; background: #000; }

.plotrow { display: flex; gap: 11px; margin-top: 9px; }
.legend { padding-top: 3px; }
.legend li { display: flex; align-items: center; height: 17px; }
.legend em { margin-top: -1px; }
.ck { width: 12px; height: 12px; border: 2px solid #000; margin-right: 6px; position: relative; background: #fff; }
.ck.on::after { content: ""; position: absolute; left: 1px; top: 1px; width: 6px; height: 3px; border-left: 1.5px solid #000; border-bottom: 1.5px solid #000; transform: rotate(-45deg); }
.legend b { width: 14px; height: 14px; border: 1px solid #000; margin: -1px 2px 0 0; }
.c1 { background: #bfbfff; } .c2 { background: #000094; } .c3 { background: #e84141; } .c4 { background: #4393e8; }
.c5 { background: #41e891; } .c6 { background: #940000; } .c7 { background: #ff8400; }
.grid { stroke: #999; fill: none; stroke-dasharray: 4 2; }
.axis { stroke: #333; fill: none; }
.plot text { font: 10.2px "Liberation Sans", sans-serif; fill: #333; }
.yl { text-anchor: end; }

.pages { height: 26px; flex: none; margin: 0 2px; display: flex; background: #e6eaf6; border-bottom: 2px solid #fff; }
.page { width: 52px; height: 24px; border-top: 1px solid #808080; border-right: 1px solid #808080; display: flex; align-items: center; gap: 4px; padding: 0 0 2px 4px; white-space: nowrap; }
.page.cur { width: 53px; padding-left: 7px; background: #fff; border-top-color: #fff; border-bottom: 1px solid #808080; border-radius: 0 0 4px 0; }
.w2 { width: 100px; padding-left: 5px; } .w3 { width: 64px; padding-left: 6px; } .w7 { width: 76px; }
.pages::after { content: ""; flex: 1; border-top: 1px solid #808080; }

.taskbar { height: 35px; flex: none; display: flex; background: #d6d3ce; margin-left: 2px; padding-top: 2px; box-shadow: inset 0 1px #d6d3ce, inset 0 2px #fff; overflow: hidden; }
.start { width: 47px; height: 36px; margin: 1px 0 0 2px; flex: none; border: 1px solid #fff; border-right: 2px solid #555; display: flex; align-items: center; padding: 0 0 2px 1px; gap: 1px; white-space: nowrap; }
.grip { width: 3px; height: 36px; margin: 3px 0 0 7px; border-left: 1px solid #808080; border-right: 1px solid #fff; flex: none; }
.quick { display: flex; gap: 20px; padding: 4px 0 0 18px; width: 308px; flex: none; }
.quick svg:nth-child(2) { margin-top: 5px; }
.quick svg:nth-child(3), .quick svg:nth-child(5), .quick svg:nth-child(6) { margin-top: 2px; }
.quick svg:nth-child(4) { margin: 1px 0 0 -1px; }
.tasks { display: flex; gap: 2px; }
.task { width: 48px; height: 40px; margin-top: 1px; flex: none; border: 1px solid #fff; border-right: 2px solid #444; display: flex; justify-content: center; padding-top: 5px; }
.task.down { background: #fff; border: 2px solid #444; border-right: 1px solid #fff; padding-top: 1px; }
.lang { margin-left: auto; display: flex; gap: 5px; align-items: center; padding: 0 4px 0 8px; border-left: 2px solid #fff; height: 33px; margin-top: 2px; }
.lang i { width: 2px; height: 22px; border-left: 1px solid #808080; border-right: 1px solid #fff; }
.tray { width: 174px; height: 36px; margin: 1px 3px 0 0; border: 1px solid #808080; border-right-color: #fff; display: flex; align-items: center; padding: 0 1px 0 5px; gap: 8px; flex: none; }
.clock { flex: 1; display: flex; flex-direction: column; align-items: center; gap: 1px; margin: 0 -2px 0 0; }

.tip { position: absolute; left: 334px; top: 238px; width: 1175px; height: 31px; border: 1px solid #000; background: #ffffe1; padding: 0 1px; display: flex; flex-direction: column; }
```
